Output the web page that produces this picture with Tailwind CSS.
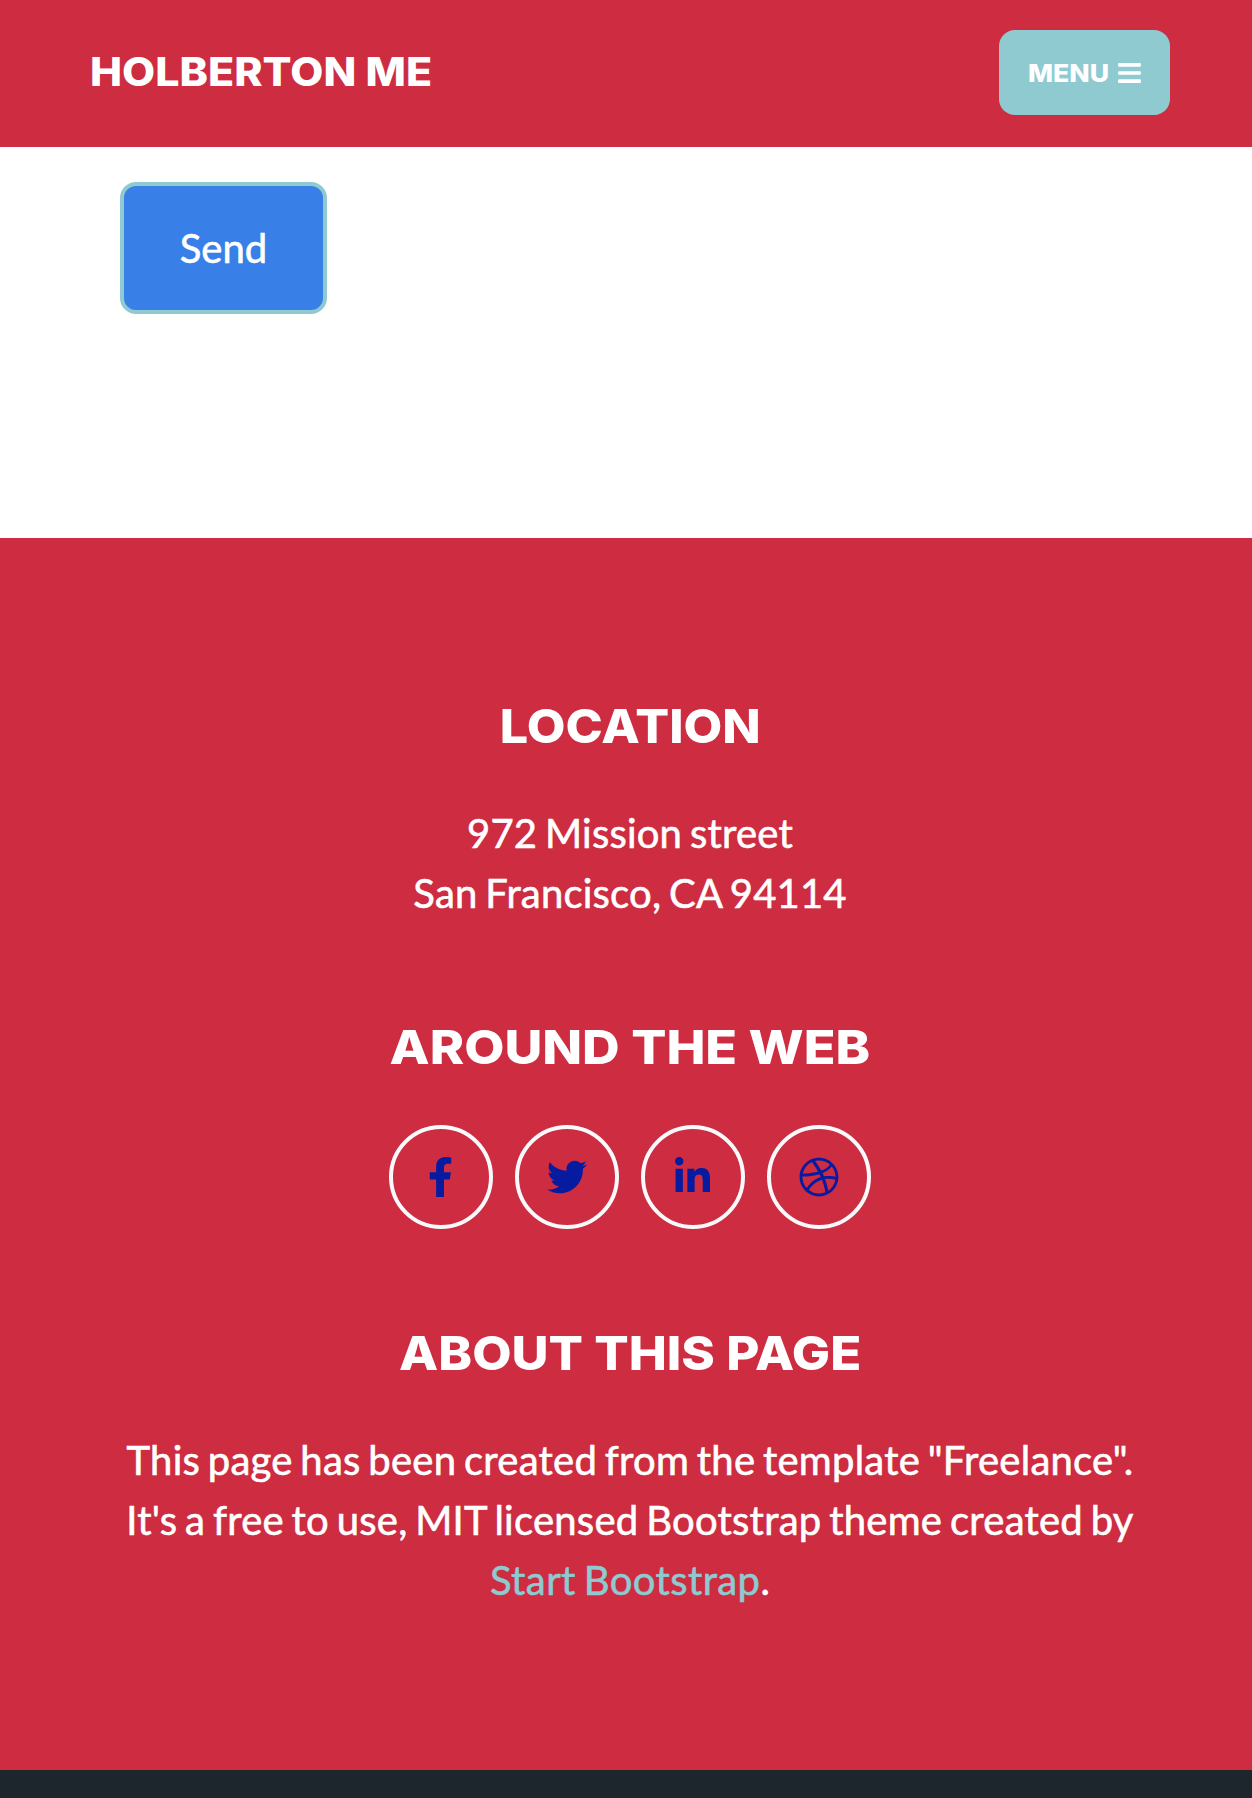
<!DOCTYPE html>
<html lang="en">
<head>
<meta charset="utf-8">
<title>Holberton Me</title>
<script src="https://cdn.jsdelivr.net/npm/@tailwindcss/browser@4"></script>
</head>
<body class="flex h-[1798px] flex-col overflow-hidden bg-white font-[Lato,sans-serif] text-[40px] leading-[60px] text-white">
<nav class="flex h-[147px] shrink-0 items-start justify-between bg-[#cd2c41] pt-[30px] pr-[82px] pl-[90px]">
  <a class="mt-[13px] origin-left scale-x-[1.1] font-[Inter,sans-serif] text-[39px] leading-[58px] font-extrabold whitespace-nowrap">HOLBERTON ME</a>
  <button class="flex h-[85px] w-[171px] items-center rounded-2xl bg-[#8ecad0] pl-[29px] font-[Inter,sans-serif] text-[25px] leading-[38px] font-extrabold">
    <span class="w-[90px] origin-left scale-x-[1.065] text-left">MENU</span>
    <svg class="h-[26px] w-[23px]" viewBox="0 0 448 512" fill="currentColor"><path d="M16 132h416c8.837 0 16-7.163 16-16V76c0-8.837-7.163-16-16-16H16C7.163 60 0 67.163 0 76v40c0 8.837 7.163 16 16 16zm0 160h416c8.837 0 16-7.163 16-16v-40c0-8.837-7.163-16-16-16H16c-8.837 0-16 7.163-16 16v40c0 8.837 7.163 16 16 16zm0 160h416c8.837 0 16-7.163 16-16v-40c0-8.837-7.163-16-16-16H16c-8.837 0-16 7.163-16 16v40c0 8.837 7.163 16 16 16z"/></svg>
  </button>
</nav>
<main class="h-[391px] shrink-0 pt-[35px] pl-[120px]">
  <button class="flex h-[132px] w-[207px] items-center justify-center rounded-2xl border-4 border-[#8ecad0] bg-[#387fe7] [-webkit-text-stroke:0.6px]">Send</button>
</main>
<footer class="flex h-[1232px] shrink-0 flex-col items-center bg-[#cd2c41] pt-[159px] pl-2 text-center">
  <h4 class="mb-[48px] scale-x-[1.067] font-[Inter,sans-serif] text-[47px] leading-[58px] font-extrabold">LOCATION</h4>
  <p class="tracking-[0.2px] [word-spacing:-2.6px] [-webkit-text-stroke:0.6px]">972 Mission street<br>San Francisco, CA 94114</p>
  <h4 class="mt-[95px] mb-[49px] scale-x-[1.108] font-[Inter,sans-serif] text-[47px] leading-[58px] font-extrabold">AROUND THE WEB</h4>
  <div class="flex gap-[22px] text-[#071ba1]">
    <a class="flex size-[104px] items-center justify-center rounded-full border-4 border-[#f8f9fa]"><svg class="mr-px h-10 w-[25px]" viewBox="0 0 320 512" fill="currentColor"><path d="M279.14 288l14.22-92.66h-88.91v-60.13c0-25.35 12.42-50.06 52.24-50.06h40.42V6.26S260.43 0 225.36 0c-73.22 0-121.08 44.38-121.08 124.72v70.62H22.89V288h81.39v224h100.17V288z"/></svg></a>
    <a class="flex size-[104px] items-center justify-center rounded-full border-4 border-[#f8f9fa]"><svg class="size-10" viewBox="0 0 512 512" fill="currentColor"><path d="M459.37 151.716c.325 4.548.325 9.097.325 13.645 0 138.72-105.583 298.558-298.558 298.558-59.452 0-114.68-17.219-161.137-47.106 8.447.974 16.568 1.299 25.34 1.299 49.055 0 94.213-16.568 130.274-44.832-46.132-.975-84.792-31.188-98.112-72.772 6.498.974 12.995 1.624 19.818 1.624 9.421 0 18.843-1.3 27.614-3.573-48.081-9.747-84.143-51.98-84.143-102.985v-1.299c13.969 7.797 30.214 12.67 47.431 13.319-28.264-18.843-46.781-51.005-46.781-87.391 0-19.492 5.197-37.36 14.294-52.954 51.655 63.675 129.3 105.258 216.365 109.807-1.624-7.797-2.599-15.918-2.599-24.04 0-57.828 46.782-104.934 104.934-104.934 30.213 0 57.502 12.67 76.67 33.137 23.715-4.548 46.456-13.32 66.599-25.34-7.798 24.366-24.366 44.833-46.132 57.827 21.117-2.273 41.584-8.122 60.426-16.243-14.292 20.791-32.161 39.308-52.628 54.253z"/></svg></a>
    <a class="flex size-[104px] items-center justify-center rounded-full border-4 border-[#f8f9fa]"><svg class="mr-px h-10 w-[35px]" viewBox="0 0 448 512" fill="currentColor"><path d="M100.28 448H7.4V148.9h92.88zM53.79 108.1C24.09 108.1 0 83.5 0 53.8a53.79 53.79 0 0 1 107.58 0c0 29.7-24.1 54.3-53.79 54.3zM447.9 448h-92.68V302.4c0-34.7-.7-79.2-48.29-79.2-48.29 0-55.69 37.7-55.69 76.7V448h-92.78V148.9h89.08v40.8h1.3c12.4-23.5 42.69-48.3 87.88-48.3 94 0 111.28 61.9 111.28 142.3V448z"/></svg></a>
    <a class="flex size-[104px] items-center justify-center rounded-full border-4 border-[#f8f9fa]"><svg class="size-10" viewBox="0 0 512 512" fill="currentColor"><path d="M256 8C119.252 8 8 119.252 8 256s111.252 248 248 248 248-111.252 248-248S392.748 8 256 8zm163.97 114.366c29.503 36.046 47.369 81.957 47.835 131.955-6.984-1.477-77.018-15.682-147.502-6.818-5.752-14.041-11.181-26.393-18.617-41.614 78.321-31.977 113.818-77.482 118.284-83.523zM396.421 97.87c-3.81 5.427-35.697 48.286-111.021 76.519-34.712-63.776-73.185-116.168-79.04-124.008 67.176-16.193 137.966 1.27 190.061 47.489zm-230.48-33.25c5.585 7.659 43.438 60.116 78.537 122.509-99.087 26.313-186.36 25.934-195.834 25.809C62.38 147.205 106.678 92.573 165.941 64.62zM44.17 256.323c0-2.166.043-4.322.108-6.473 9.268.19 111.92 1.513 217.706-30.146 6.064 11.868 11.857 23.915 17.174 35.949-76.599 21.575-146.194 83.527-180.531 142.306C64.794 360.405 44.17 310.73 44.17 256.323zm81.807 167.113c22.127-45.233 82.178-103.622 167.579-132.756 29.74 77.283 42.039 142.053 45.189 160.638-68.112 29.013-150.015 21.053-212.768-27.882zm248.38 8.489c-2.171-12.886-13.446-74.897-41.152-151.033 66.38-10.626 124.7 6.768 131.947 9.055-9.442 58.941-43.273 109.844-90.795 141.978z"/></svg></a>
  </div>
  <h4 class="mt-[95px] mb-[48px] scale-x-[1.084] font-[Inter,sans-serif] text-[47px] leading-[58px] font-extrabold">ABOUT THIS PAGE</h4>
  <p class="tracking-[0.25px] whitespace-nowrap [word-spacing:-2.8px] [-webkit-text-stroke:0.6px]">This page has been created from the template "Freelance".<br>It's a free to use, MIT licensed Bootstrap theme created by<br><a class="tracking-[0.4px] text-[#8ecad0]">Start Bootstrap</a>.</p>
</footer>
<div class="grow bg-[#1d252d]"></div>
</body>
</html>
